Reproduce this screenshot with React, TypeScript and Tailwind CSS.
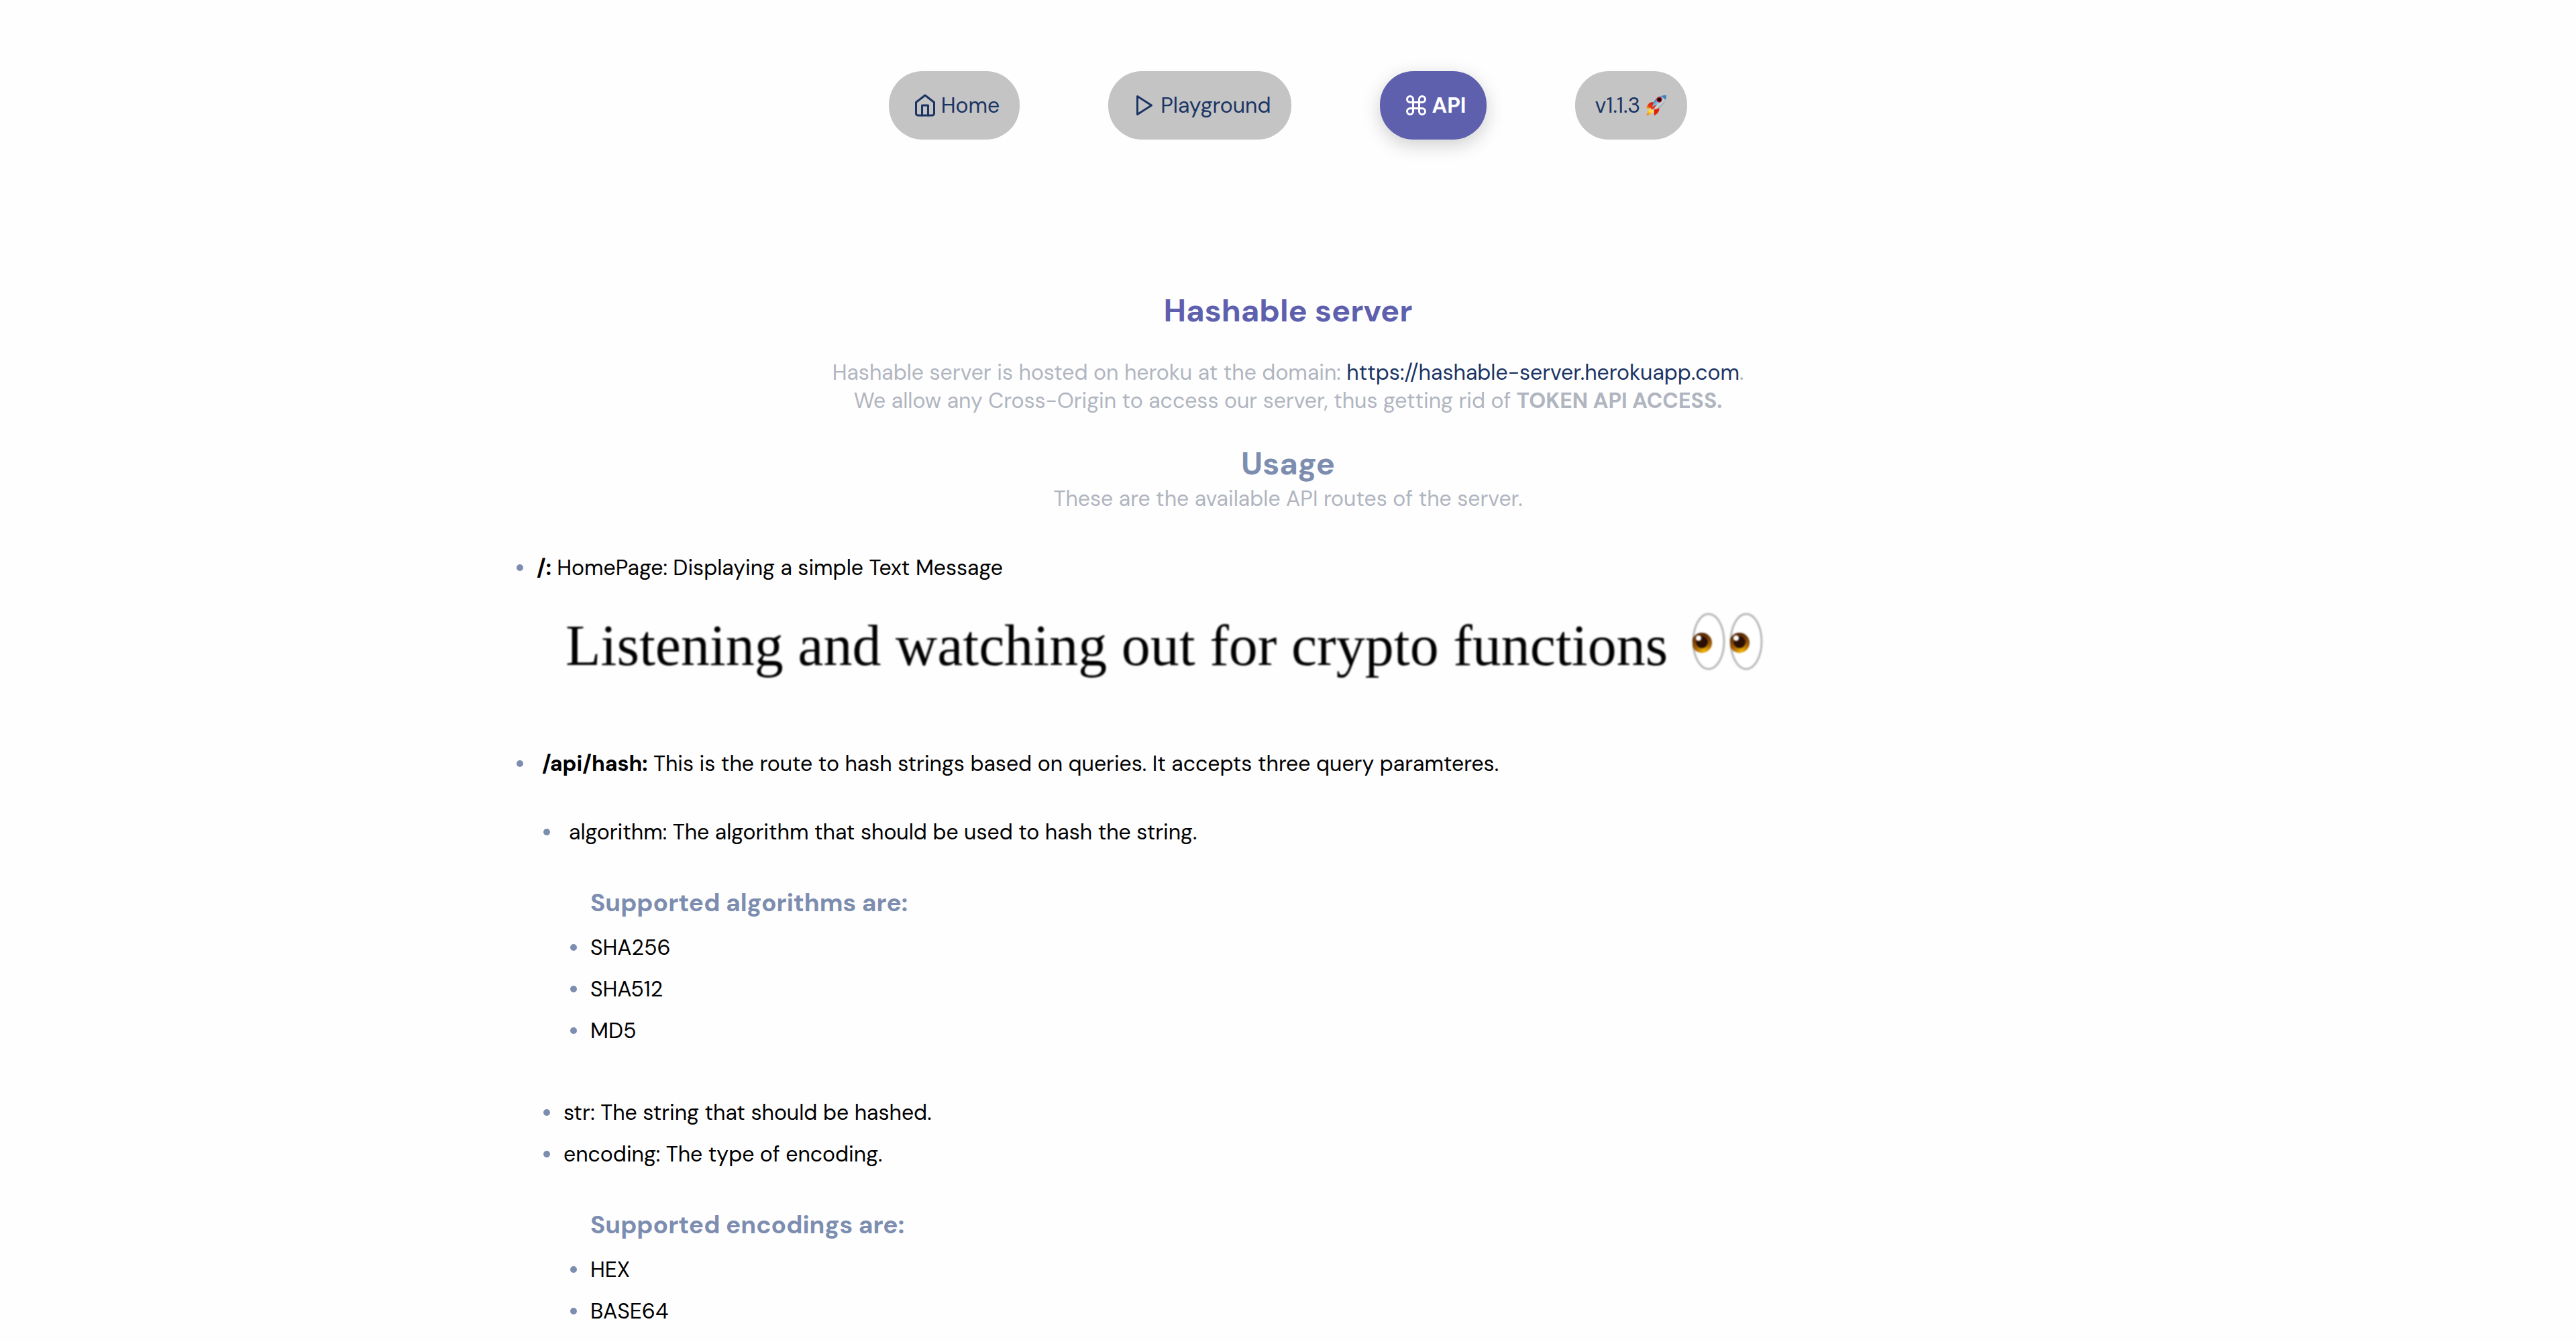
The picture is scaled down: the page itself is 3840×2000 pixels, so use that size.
import type { ReactNode } from "react";
import { FiCommand, FiHome, FiPlay } from "react-icons/fi";

function RocketIcon() {
  return (
    <svg viewBox="0 0 32 32" className="size-8" aria-label="rocket" role="img">
      <defs>
        <linearGradient id="hull" x1="12" y1="8" x2="24" y2="20" gradientUnits="userSpaceOnUse">
          <stop offset="0" stopColor="#2a6fae" />
          <stop offset="0.35" stopColor="#7fb4dc" />
          <stop offset="0.65" stopColor="#cdd7dd" />
          <stop offset="1" stopColor="#78838b" />
        </linearGradient>
        <linearGradient id="fin" x1="10" y1="11" x2="3" y2="21" gradientUnits="userSpaceOnUse">
          <stop offset="0" stopColor="#d81407" />
          <stop offset="0.65" stopColor="#f03a10" />
          <stop offset="1" stopColor="#ffb02a" />
        </linearGradient>
        <linearGradient id="flame" x1="10" y1="20" x2="2" y2="31" gradientUnits="userSpaceOnUse">
          <stop offset="0" stopColor="#fff27a" />
          <stop offset="0.5" stopColor="#ffd42a" />
          <stop offset="1" stopColor="#f0641e" />
        </linearGradient>
      </defs>
      <path d="M14 12C10 10.500 6 11.500 4 14.500L0 20.500C4 20.500 8 20.500 12 20Z" fill="url(#fin)" />
      <path d="M20.500 18.500C21 23 19.500 26 17.500 28L13 31.500C13 28 12.500 25 13 21Z" fill="#e0200c" />
      <path d="M7 20.500C4 23 2.500 27 1.500 31C6 30.500 10 28.500 12.500 24.500Z" fill="url(#flame)" />
      <path d="M31 1C24 .5 17 3.500 13 9.500C11 13 10 16 10 18.500L13.500 22C17 21.500 20.500 20.500 23.500 17.500C28.500 12.500 31 7 31 1Z" fill="url(#hull)" />
      <path d="M31 1C28.500 .8 26 1.200 24 2L29.500 8C30.500 5.800 31 3.500 31 1Z" fill="#3f80b4" />
      <path d="M17 14.500L9.500 18.500L8 22.500L12.500 21Z" fill="#e8330f" />
      <circle cx="20.500" cy="7.500" r="4.200" fill="#c4161c" />
      <circle cx="20.500" cy="7.500" r="2.800" fill="#1a0c10" />
    </svg>
  );
}

function EyesIcon() {
  return (
    <svg viewBox="0 0 106 86" className="h-[86px] w-[106px]" aria-label="eyes" role="img">
      <defs>
        <radialGradient id="iris" cx="0.6" cy="0.9" r="0.9">
          <stop offset="0" stopColor="#f0b400" />
          <stop offset="0.45" stopColor="#a86405" />
          <stop offset="1" stopColor="#4a1c02" />
        </radialGradient>
        <clipPath id="lids">
          <ellipse cx="25" cy="43" rx="24" ry="42" />
          <ellipse cx="81" cy="43" rx="24" ry="42" />
        </clipPath>
      </defs>
      {[25, 81].map((x) => (
        <g key={x}>
          <ellipse cx={x} cy="43" rx="23" ry="41" fill="#ffffff" stroke="#b8b8b8" strokeWidth="3" />
          <g clipPath="url(#lids)">
            <circle cx={x - 10} cy="45" r="15" fill="url(#iris)" />
            <circle cx={x - 10} cy="44" r="9" fill="#2a0f02" />
            <circle cx={x - 15} cy="38" r="4" fill="#ffffff" />
          </g>
        </g>
      ))}
    </svg>
  );
}

const pill =
  "flex items-center rounded-[50px] bg-[#c4c4c4] p-[30px] text-[#1b3464]";
const activePill =
  "flex items-center rounded-[50px] bg-[#5e60ae] p-[30px] font-bold text-white shadow-[0_8px_28px_rgba(0,0,0,0.19)]";
const navIcon = "mx-1.5 size-9";

function Item({ children, indent = false }: { children: ReactNode; indent?: boolean }) {
  return (
    <div className="flex items-center gap-5">
      <span className="size-2.5 shrink-0 rounded-full bg-[#7c8db0]" />
      <span className={indent ? "pl-2" : ""}>{children}</span>
    </div>
  );
}

function Options({ title, items }: { title: string; items: string[] }) {
  return (
    <div className="pt-[60px] pl-10">
      <h3 className="pl-[30px] text-[37px] leading-[48px] font-bold text-[#7c8db0]">{title}</h3>
      <ul className="mt-[22px] flex flex-col gap-5">
        {items.map((item) => (
          <li key={item}>
            <Item>{item}</Item>
          </li>
        ))}
      </ul>
    </div>
  );
}

export default function App() {
  return (
    <div className="min-h-screen bg-[#fefefe] pt-[106px] pb-7 font-['DM_Sans','Inter',sans-serif] text-[32px] leading-[42px] text-black">
      <nav className="flex justify-center gap-[132px]">
        <a href="#home" className={pill}>
          <FiHome className={navIcon} />
          Home
        </a>
        <a href="#playground" className={pill}>
          <FiPlay className={navIcon} />
          Playground
        </a>
        <a href="#api" className={activePill}>
          <FiCommand className={navIcon} />
          API
        </a>
        <a href="#version" className={pill}>
          <span className="mr-2">v1.1.3</span>
          <RocketIcon />
        </a>
      </nav>

      <main className="mx-auto mt-[224px] w-3/5">
        <header className="text-center text-[#b0b5c0]">
          <h1 className="text-[47px] leading-[62px] font-bold text-[#5e60ae]">Hashable server</h1>
          <p className="mt-10">
            Hashable server is hosted on heroku at the domain:{" "}
            <a href="https://hashable-server.herokuapp.com" className="text-[#1b3464]">
              https://hashable-server.herokuapp.com
            </a>
            .<br />
            We allow any Cross-Origin to access our server, thus getting rid of{" "}
            <b className="font-bold">TOKEN API ACCESS.</b>
          </p>
          <h2 className="mt-[42px] text-[47px] leading-[62px] font-bold text-[#7c8db0]">Usage</h2>
          <p>These are the available API routes of the server.</p>
        </header>

        <ul className="mt-[61px] pl-0.5">
          <li>
            <Item>
              <b className="font-bold">/:</b> HomePage: Displaying a simple Text Message
            </Item>
            <figure className="mt-5 flex h-[230px] items-start gap-9 pt-[26px] pl-[73px] font-['Liberation_Serif',serif] text-[86px] leading-[98px] blur-[1px]">
              <figcaption>Listening and watching out for crypto functions</figcaption>
              <EyesIcon />
            </figure>
          </li>
          <li>
            <Item indent>
              <b className="font-bold">/api/hash:</b> This is the route to hash strings based on queries. It accepts
              three query paramteres.
            </Item>
            <ul className="mt-[60px] pl-10">
              <li>
                <Item indent>algorithm: The algorithm that should be used to hash the string.</Item>
                <Options title="Supported algorithms are:" items={["SHA256", "SHA512", "MD5"]} />
              </li>
              <li className="mt-20">
                <Item>str: The string that should be hashed.</Item>
              </li>
              <li className="mt-5">
                <Item>encoding: The type of encoding.</Item>
                <Options title="Supported encodings are:" items={["HEX", "BASE64"]} />
              </li>
            </ul>
          </li>
        </ul>
      </main>
    </div>
  );
}
